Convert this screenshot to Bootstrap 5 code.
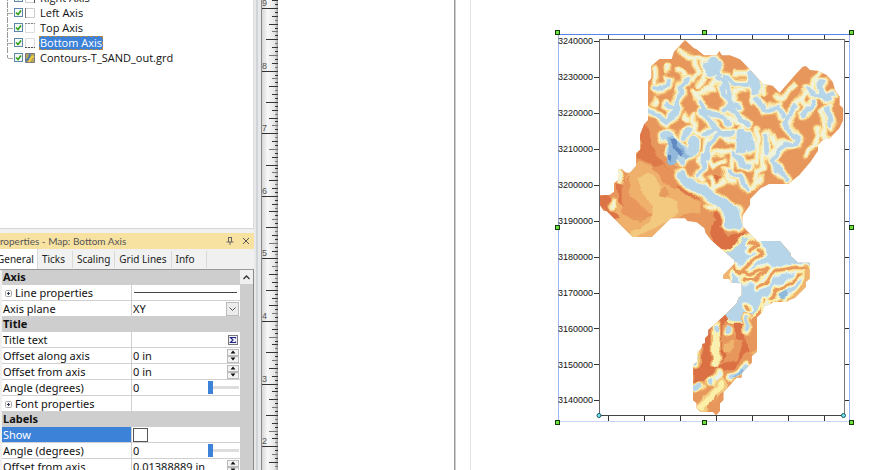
<!DOCTYPE html>
<html lang="en">
<head>
<meta charset="utf-8">
<meta name="viewport" content="width=device-width, initial-scale=1">
<title>Map: Bottom Axis</title>
<link href="https://cdn.jsdelivr.net/npm/bootstrap@5.3.0/dist/css/bootstrap.min.css" rel="stylesheet">
<style>
body{font-family:"Noto Sans","Open Sans",sans-serif;font-size:11px;line-height:15px;color:#111;background:#fff}
.side{width:254px;background:#f0f0f0}
.tree{height:229px;background:#fff;border-right:1px solid #dcdcdc;border-bottom:1px solid #d5d5d5;padding-left:7px;font-family:"Open Sans",sans-serif}
.tree ul{margin-top:-10px}
.tree li{height:15px;position:relative;padding-left:7px}
.tree li::before{content:"";position:absolute;left:0;top:0;height:15px;width:6px;border-left:1px dashed #999;}
.tree li::after{content:"";position:absolute;left:1px;top:8px;width:5px;border-top:1px dashed #aaa}
.tree li:last-child::before{height:8px}
.tick-box{appearance:none;width:9px;height:9px;margin:0;border:1px solid #5d86a8;background:#f5f9f5}
.tick-wrap{position:relative;width:9px;height:9px}
.tick-wrap svg{position:absolute;left:0;top:0;pointer-events:none}
.tree-icon{margin:0 3px 0 2px}
.tree label{padding:0 1px;line-height:14px}
.chosen{background:#3c82d9;color:#fff;outline:1px dashed #b98743;outline-offset:-1px}
.title-bar{height:16px;background:#f8e2a2;color:#555;margin-top:4px;font-family:Lato,sans-serif;font-size:10px}
.title-bar span{margin-left:-6px}
.plain{border:0;background:none;padding:0;display:flex;color:inherit}
.tabs{height:20px;font-size:10px}
.tabs button{border:0;border-right:1px solid #d9d9d9;background:#f1f1f1;height:17px;margin-top:2px;padding:0 4px;color:#222}
.tabs button:nth-child(2){padding-right:7px}
.tabs button:first-child{background:#fff;margin-left:-7px;height:20px;margin-top:0;padding-right:3px}
.tabs button:last-child{padding:0 11px 0 4px}
.grid-box{border-top:1px solid #999;border-right:1px solid #888;overflow:hidden}
.props{table-layout:fixed;width:238px;margin-left:2px;background:#fff;border-collapse:separate;border-spacing:0}
.props th,.props td{padding:0 1px;height:16px;line-height:15px;border-bottom:1px solid #d0d0d0;font-weight:400;white-space:nowrap}
.props th[scope=row]{width:130px;border-right:1px solid #d0d0d0}
.props th.sect{background:#cecece;font-weight:700;height:15px;line-height:14px;border-color:#cecece}
.props td>div{height:15px}
.props input[type=text]{border:0;padding:0;background:none;height:15px;width:90px;color:inherit}
.props .active{background:#3c82d9;color:#fff}
.expander{margin:0 3px 1px 2px}
.pick{appearance:none;border:0;background:none;padding:0;width:92px;height:15px;line-height:15px;color:inherit}
.dd{width:13px;height:14px;border:1px solid #bbb;background:#ececec}
.spin{width:12px}
.spin button{height:7px;width:12px;padding:0;border:1px solid #bbb;background:#f3f3f3;display:flex;align-items:center;justify-content:center}
.show-box{appearance:none;width:15px;height:14px;border:1px solid #555;margin:0;background:#fff;display:block}
.slide{appearance:none;width:31px;height:13px;background:linear-gradient(#ddd,#ddd) center/100% 3px no-repeat;margin:0}
.slide::-webkit-slider-thumb{appearance:none;width:5px;height:13px;background:#3c82d9}
.sbar{width:13px;background:#cdcdcd}
.sbar button{height:14px;width:13px;background:#f0f0f0;align-items:center;justify-content:center}
.splitter{width:8px;background:#e6e8ea;border-right:1px solid #888}
.splitter::before{content:"";display:block;height:100%;width:2px;margin-left:2px;background:#d0d3d8}
.ruler{width:16px;background:linear-gradient(90deg,#d7d7d7,#f8f8f8 35%,#e6e6e6 80%,#999)}
.ruler text{font:9px "Liberation Sans",Arial,sans-serif;fill:#555}
.sheet-gap{width:176px}
.sheet-edge{width:2px;background:linear-gradient(90deg,#999 50%,#ccc 50%)}
.margin-line{width:1px;margin-left:14px;background:#e4e4e4}
.map-area{padding:20px 0 0 79px}
.axis-labels{font:9px "Liberation Sans",Arial,sans-serif;fill:#111;text-anchor:end}
</style>
<script src="https://cdn.jsdelivr.net/npm/bootstrap@5.3.0/dist/js/bootstrap.bundle.min.js"></script>
</head>
<body class="vh-100 overflow-hidden d-flex">
<svg width="0" height="0" class="position-absolute" aria-hidden="true">
<symbol id="tick" viewBox="0 0 9 9"><path d="M2 4.5l2 2 3-4" fill="none" stroke="#32a11b" stroke-width="1.6"/></symbol>
<symbol id="up" viewBox="0 0 6 4"><path d="M0.500 3.500h5L3 .5z" fill="#111"/></symbol>
<symbol id="down" viewBox="0 0 6 4"><path d="M.5 .5h5L3 3.500z" fill="#111"/></symbol>
<symbol id="plus" viewBox="0 0 7 7"><rect x=".5" y=".5" width="6" height="6" rx="1" fill="#f6f6f6" stroke="#aaa"/><path d="M2 3.5h3M3.5 2v3" stroke="#335"/></symbol>
</svg>
<aside class="side d-flex flex-column flex-shrink-0 overflow-hidden">
  <div class="tree flex-shrink-0 overflow-hidden">
    <ul class="list-unstyled mb-0">
      <li class="d-flex align-items-center"><span class="tick-wrap d-flex"><input class="tick-box" type="checkbox" id="t0" checked><svg width="9" height="9"><use href="#tick"/></svg></span><svg class="tree-icon" width="11" height="10"><path d="M.5 .5h9v9h-9z" fill="#fff" stroke="#ccc"/><path d="M9.500 0v10" stroke="#555"/></svg><label for="t0">Right Axis</label></li>
      <li class="d-flex align-items-center"><span class="tick-wrap d-flex"><input class="tick-box" type="checkbox" id="t1" checked><svg width="9" height="9"><use href="#tick"/></svg></span><svg class="tree-icon" width="11" height="10"><path d="M.5 .5h9v9h-9z" fill="#fff" stroke="#ccc"/><path d="M.5 0v10" stroke="#777"/></svg><label for="t1">Left Axis</label></li>
      <li class="d-flex align-items-center"><span class="tick-wrap d-flex"><input class="tick-box" type="checkbox" id="t2" checked><svg width="9" height="9"><use href="#tick"/></svg></span><svg class="tree-icon" width="11" height="10"><path d="M.5 .5h9v9h-9z" fill="#fff" stroke="#ddd"/><path d="M0 .5h10" stroke="#888" stroke-dasharray="2 1"/></svg><label for="t2">Top Axis</label></li>
      <li class="d-flex align-items-center"><span class="tick-wrap d-flex"><input class="tick-box" type="checkbox" id="t3" checked><svg width="9" height="9"><use href="#tick"/></svg></span><svg class="tree-icon" width="11" height="10"><path d="M.5 .5h9v9h-9z" fill="#fff" stroke="#ddd"/><path d="M0 9.500h10" stroke="#555" stroke-dasharray="2 1"/></svg><label for="t3" class="chosen">Bottom Axis</label></li>
      <li class="d-flex align-items-center"><span class="tick-wrap d-flex"><input class="tick-box" type="checkbox" id="t4" checked><svg width="9" height="9"><use href="#tick"/></svg></span><svg class="tree-icon" width="11" height="10"><path d="M.5 .5h9v9h-9z" fill="#b7a755" stroke="#778"/><path d="M1 8l3-3 1-4" stroke="#4a77ae" stroke-width="2" fill="none"/><path d="M4 9l2-4 3-2" stroke="#efcf42" stroke-width="2" fill="none"/></svg><label for="t4">Contours-T_SAND_out.grd</label></li>
    </ul>
  </div>
  <div class="title-bar d-flex align-items-center flex-shrink-0"><span class="flex-grow-1 text-nowrap">Properties - Map: Bottom Axis</span>
    <button class="plain me-2" aria-label="Pin"><svg width="8" height="8" fill="none" stroke="#666"><path d="M2 .5h4M2.500 1v4M5.500 1v4M.5 5h7M4 5v3"/></svg></button>
    <button class="plain me-1" aria-label="Close"><svg width="8" height="8" fill="none" stroke="#555"><path d="M1 1l6 6M7 1l-6 6"/></svg></button>
  </div>
  <div class="tabs d-flex flex-shrink-0" role="tablist"><button role="tab" aria-selected="true">General</button><button role="tab">Ticks</button><button role="tab">Scaling</button><button role="tab">Grid Lines</button><button role="tab">Info</button></div>
  <div class="grid-box d-flex flex-grow-1">
    <table class="props align-self-start flex-shrink-0">
      <colgroup><col style="width:130px"><col></colgroup>
      <tbody>
      <tr><th class="sect" colspan="2">Axis</th></tr>
      <tr><th scope="row"><svg class="expander" width="7" height="7"><use href="#plus"/></svg>Line properties</th><td><svg class="d-block" width="104" height="3"><path d="M1 1.500h103" stroke="#444"/></svg></td></tr>
      <tr><th scope="row"><label for="plane">Axis plane</label></th><td><div class="d-flex align-items-center justify-content-between"><select class="pick" id="plane"><option>XY</option></select><span class="dd d-flex align-items-center justify-content-center"><svg width="7" height="4"><path d="M.5 .5l3 3 3-3" fill="none" stroke="#555"/></svg></span></div></td></tr>
      <tr><th class="sect" colspan="2">Title</th></tr>
      <tr><th scope="row"><label for="tt">Title text</label></th><td><div class="d-flex align-items-center justify-content-between"><input type="text" id="tt"><button class="plain" aria-label="Text editor"><svg width="11" height="10"><rect x=".5" y=".5" width="9" height="9" fill="#f3f3ff" stroke="#777"/><path d="M7.500 3.500V2.500h-5L5 5 2.500 7.500h5v-1" stroke="#22277c" fill="none" stroke-width="1.200"/></svg></button></div></td></tr>
      <tr><th scope="row"><label for="oa">Offset along axis</label></th><td><div class="d-flex align-items-center justify-content-between"><input type="text" id="oa" value="0 in"><span class="spin"><button aria-label="Increase"><svg width="6" height="4"><use href="#up"/></svg></button><button aria-label="Decrease"><svg width="6" height="4"><use href="#down"/></svg></button></span></div></td></tr>
      <tr><th scope="row"><label for="of">Offset from axis</label></th><td><div class="d-flex align-items-center justify-content-between"><input type="text" id="of" value="0 in"><span class="spin"><button aria-label="Increase"><svg width="6" height="4"><use href="#up"/></svg></button><button aria-label="Decrease"><svg width="6" height="4"><use href="#down"/></svg></button></span></div></td></tr>
      <tr><th scope="row"><label for="an">Angle (degrees)</label></th><td><div class="d-flex align-items-center justify-content-between"><span>0</span><input class="slide" type="range" id="an" value="0"></div></td></tr>
      <tr><th scope="row"><svg class="expander" width="7" height="7"><use href="#plus"/></svg>Font properties</th><td></td></tr>
      <tr><th class="sect" colspan="2">Labels</th></tr>
      <tr><th scope="row" class="active"><label for="sh">Show</label></th><td><input class="show-box" type="checkbox" id="sh"></td></tr>
      <tr><th scope="row"><label for="an2">Angle (degrees)</label></th><td><div class="d-flex align-items-center justify-content-between"><span>0</span><input class="slide" type="range" id="an2" value="0"></div></td></tr>
      <tr><th scope="row"><label for="of2">Offset from axis</label></th><td><div class="d-flex align-items-center justify-content-between"><input type="text" id="of2" value="0.01388889 in"><span class="spin"><button aria-label="Increase"><svg width="6" height="4"><use href="#up"/></svg></button><button aria-label="Decrease"><svg width="6" height="4"><use href="#down"/></svg></button></span></div></td></tr>
      </tbody>
    </table>
    <div class="sbar flex-shrink-0"><button class="plain" aria-label="Scroll up"><svg width="7" height="5"><path d="M.5 4l3-3 3 3" fill="none" stroke="#333" stroke-width="1.300"/></svg></button></div>
  </div>
</aside>
<div class="splitter flex-shrink-0"></div>
<div class="ruler flex-shrink-0 overflow-hidden"><svg id="ruler" width="16" height="100%" class="d-block" shape-rendering="crispEdges"></svg></div>
<main class="d-flex flex-grow-1 overflow-hidden">
  <div class="sheet-gap flex-shrink-0"></div><div class="sheet-edge flex-shrink-0"></div><div class="margin-line flex-shrink-0"></div>
  <div class="map-area flex-grow-1">
  <svg width="310" height="410" viewBox="0 0 310 410" class="d-block" role="img" aria-label="Contour map">
    <defs>
      <filter id="ripple" filterUnits="userSpaceOnUse" x="120" y="40" width="800" height="1170" color-interpolation-filters="sRGB"><feTurbulence type="fractalNoise" baseFrequency=".035" numOctaves="1" seed="4"/><feDisplacementMap in="SourceGraphic" scale="26" xChannelSelector="R" yChannelSelector="G"/><feGaussianBlur stdDeviation="1.8"/></filter>
      <clipPath id="land"><path d="M405 60L432 85 440 88 462 106H500L508 93 516 106H540L570 118 582 130 640 193 668 197 689 218 735 165 758 140 768 138 780 150 802 152 830 165 848 185 857 215 869 230V255L880 265V300L868 325 838 356 820 358 804 375V392L782 425 748 465 715 492H657L632 505 600 538V555L577 588V618L622 663H690L722 700V708L745 728H780V775L768 785V800L735 833 718 840 710 846H670L655 855 643 857 635 878 621 892V995L605 1008V1028L575 1060V1073H560L520 1117V1140L510 1150V1172L498 1186 490 1176H452L440 1165V1150L429 1140V1035L441 1025V1000L455 985 457 972 465 970V955L475 945V930L525 885 560 850 565 835 575 825V790L545 788 537 776H520V765L553 732V720L515 688 483 660 467 640 463 625 440 607 412 603 405 595H362L305 651H248L170 573 160 572 147 550V525H178L192 515V490L204 480V447H215L228 458H240L258 438V400L270 390V345L283 312 294 300V185L304 175V138L328 117H365L372 95Z"/></clipPath>
      <g id="narrow">
        <path d="M315 145L316 188M348 175L354 190M385 148L397 163M316 238V252M390 98L405 103 430 115 482 118M407 176L430 178 441 160 436 120M430 215L445 222 465 210 492 205M437 225L462 248M498 180L480 200 492 207M405 290L418 298M430 285L435 335 458 345M460 120L462 180 448 195M350 135L352 150M555 160H590M553 240L556 212 580 208M640 185L643 215M530 290L575 310 582 340M608 222L612 250M735 195L690 240 678 228M738 250L790 190 806 155M768 258L790 252M805 180L800 232M762 215L754 240 764 252M800 325L805 345 795 375 770 400M838 355L820 345 818 275 840 260M688 375L655 410M622 330V390L618 430 585 425M470 355L465 400 445 420M470 405L540 390 555 410 543 440M455 440L470 420 490 440 522 420M450 460L460 480M485 475L500 500 520 485M525 450L530 475 550 485M640 380L638 445 620 455V480M680 450L700 465M590 505L620 500 632 475M204 455L210 480M190 545L188 560M260 355V390M575 365L540 360 515 340M665 350L680 372 700 370M496 505L470 520M475 560L500 565M516 300L545 305"/>
      </g>
      <g id="medium">
        <path d="M358 182L350 198 325 208 310 205M295 272L322 287 350 308 383 268 378 245 393 220 390 198 408 190 412 175M455 250L470 280 520 292 538 312M502 168L518 188 520 222 540 245 525 270M525 190L538 215 538 262 572 298 595 315M565 260L540 255M622 240L642 270 685 262M735 262L704 310 722 338 748 355 740 372 700 375 668 420 685 450 710 480M775 205L790 225 828 228 850 222M835 268L842 318M452 275L478 302 508 340 548 340M462 345L490 330M460 405L458 440 445 465M552 395L575 430 600 440M535 455L570 470 592 508M820 185L805 205 835 240M700 290L690 270M595 190L560 190 525 175M500 345L480 370 465 420M648 345L650 395M350 255L378 270M790 250L760 285M480 128L500 140 512 160M420 330L400 350"/>
      </g>
      <g id="broad">
        <path d="M490 125L500 145M475 145L480 155M605 165L618 210M575 345V385M600 382L595 350M345 345L372 365 405 410 425 395 430 365M365 395L395 420M395 465L405 482 445 505 470 520 530 562 550 610M540 565V612L562 615M555 575L560 610"/>
      </g>
      <g id="southveins">
        <path d="M600 665L625 675 600 690M570 760L610 720 640 700 625 690M572 757L600 765 650 740M580 780H610L655 745M690 750L645 785M690 750L740 742 770 745M620 800L655 785M665 835L680 815 715 790 750 765M670 850L690 840M590 860V865M645 850V842M550 735L570 760"/>
      </g>
      <g id="goldfans">
        <path d="M770 740V800L715 848M525 775L545 740"/>
      </g>
      <g id="southdrops"><path d="M497 920V1030M537 930L536 935M591 890V930M440 1035V1000M437 1105L450 1098M475 1082L485 1082M590 1040L545 1073M497 1075L510 1060M520 1095L498 1120"/></g>
    </defs>
    <g transform="scale(.333333)" clip-path="url(#land)">
      <path d="M130 50H900V1200H130Z" fill="#e8975c"/>
      <g filter="url(#ripple)">
      <!-- southwest plateau -->
      <path d="M245 450L270 425 315 440 370 485 400 525 455 545 450 575 400 590 365 600 300 665 240 665 195 590 205 510Z" fill="#efb06b"/>
      <path d="M270 290L300 340 300 380 325 410 390 480 450 510 465 540 415 530 365 495 325 445 290 425 262 415V390H270Z" fill="#de7a49"/>
      <path d="M147 525H175L180 560 210 590 190 600 145 550ZM200 490L225 480 215 510 235 530 215 560 205 540Z" fill="#dc7448"/>
      <path d="M215 490L245 470 235 510 275 560 310 590 255 600 215 575Z" fill="#e8965c"/>
      <path d="M265 475L300 460 335 500 340 530 385 540 385 580 330 615 250 655 235 640 300 605 310 580 290 530 270 510Z" fill="#f3c980"/>
      <path d="M330 520L345 505 355 520 345 535ZM245 595L300 590 275 605Z" fill="#e69a5d"/>
      <path d="M310 445L340 430 390 480 380 510 340 490Z" fill="#e79258"/>
      <path d="M480 635L490 605 515 620 530 650 590 635 545 690 500 690ZM495 575L520 580 515 615 490 620ZM490 465L510 465 525 480 510 495Z" fill="#da7044"/>
      <!-- northern basins -->
      <g fill="none" stroke-linecap="round" stroke-linejoin="round">
        <g stroke="#efb56f"><use href="#narrow" stroke-width="25"/><use href="#medium" stroke-width="36"/><use href="#broad" stroke-width="50"/></g>
        <g stroke="#fbe6a0"><use href="#narrow" stroke-width="18"/><use href="#medium" stroke-width="29"/><use href="#broad" stroke-width="43"/></g>
        <g stroke="#f0f3dc"><use href="#narrow" stroke-width="9"/><use href="#medium" stroke-width="21"/><use href="#broad" stroke-width="36"/></g>
        <g stroke="#b6d5e8"><use href="#medium" stroke-width="14"/><use href="#broad" stroke-width="30"/></g>
      </g>
      <path d="M345 350L365 345 385 360 400 395 425 410 415 420 385 405 372 435 350 425 360 395Z" fill="#92b9da"/>
      <path d="M357 355L370 348 382 362 379 380 400 400 398 409 375 390ZM357 408L367 412 366 423 358 420Z" fill="#6189c1"/>
      <!-- south-east lobe -->
      <path d="M485 685L540 695 575 650H700L790 720V850H660L635 870 600 910H500V840L560 800 510 780 540 735Z" fill="#b6d5e8" stroke="#fcefa8" stroke-width="7"/>
      <g fill="none" stroke-linecap="round" stroke-linejoin="round">
        <g stroke="#e6f2ef"><use href="#southveins" stroke-width="27"/><use href="#goldfans" stroke-width="36"/></g>
        <g stroke="#fcefa8"><use href="#southveins" stroke-width="20"/><use href="#goldfans" stroke-width="29"/></g>
        <g stroke="#efb56f"><use href="#southveins" stroke-width="11"/><use href="#goldfans" stroke-width="19"/></g>
        <use href="#southveins" stroke="#e8975c" stroke-width="7"/>
      </g>
      <path d="M685 825L710 810 718 818 700 840ZM740 690L720 700Z" fill="#8fb9d9"/>
      <!-- southern tail -->
      <path d="M420 945L515 883 535 905 560 908 600 908 610 880 640 850V1010L560 1070 510 1200H420Z" fill="#e8975c" stroke="#fcefa8" stroke-width="9"/>
      <path d="M460 930L520 880 535 900 520 915 515 980 530 1010 510 1035 560 1020 580 960 555 960 555 908H578L585 970 600 990 545 1045 480 1075 430 1090V1035L455 1030Z" fill="#da7044"/>
      <path d="M525 970L550 965 540 1000 520 995ZM600 1000L618 980 610 1010Z" fill="#efb56f"/>
      <g fill="none" stroke-linecap="round" stroke-linejoin="round">
        <use href="#southdrops" stroke="#efb56f" stroke-width="30"/><use href="#southdrops" stroke="#fcefa8" stroke-width="22"/><use href="#southdrops" stroke="#e6f2ef" stroke-width="12"/>
        <path d="M515 1090L490 1125 455 1165" stroke="#f3cb80" stroke-width="35"/><path d="M515 1090L490 1125 455 1162" stroke="#fcefa8" stroke-width="20"/>
        <path d="M537 925V932M591 895V925M439 1030V1008M437 1105L450 1098M590 1045L550 1072M497 925V935M476 1084H480" stroke="#b6d5e8" stroke-width="14"/>
        <path d="M497 945V1025" stroke="#fcefa8" stroke-width="12"/>
        <path d="M475 1165L500 1130" stroke="#e8975c" stroke-width="9"/><path d="M577 1055L558 1070" stroke="#8fb9d9" stroke-width="8"/>
      </g>
      </g>
    </g>
    <g fill="none" shape-rendering="crispEdges">
      <path d="M8.500 401.500V14.500M299.500 14.500V401.500" stroke="#9db7f5"/><path d="M8 14.500H300" stroke="#5b83ea"/><path d="M8 401.500H300" stroke="#c9d5f8"/>
      <path d="M49.500 395.500V19.500H294.500" stroke="#666"/><path d="M294.500 19V396" stroke="#777"/><path d="M49 395.500H294" stroke="#444"/>
      <path d="M44 21.500h5M44 57.500h5M44 93.500h5M44 129.500h5M44 165.500h5M44 201.500h5M44 237.500h5M44 273.500h5M44 308.500h5M44 344.500h5M44 380.500h5M295 21.500h4M295 57.500h4M295 93.500h4M295 129.500h4M295 165.500h4M295 201.500h4M295 237.500h4M295 273.500h4M295 308.500h4M295 344.500h4M295 380.500h4M58.500 15v4M94.500 15v4M130.500 15v4M166.500 15v4M202.500 15v4M238.500 15v4M274.500 15v4M58.500 396v5M94.500 396v5M130.500 396v5M166.500 396v5M202.500 396v5M238.500 396v5M274.500 396v5" stroke="#333"/>
    </g>
    <g class="axis-labels"><text x="43" y="24">3240000</text><text x="43" y="60">3230000</text><text x="43" y="96">3220000</text><text x="43" y="132">3210000</text><text x="43" y="168">3200000</text><text x="43" y="204">3190000</text><text x="43" y="240">3180000</text><text x="43" y="276">3170000</text><text x="43" y="312">3160000</text><text x="43" y="348">3150000</text><text x="43" y="383">3140000</text></g>
    <g fill="#6be33c" stroke="#173b0c" shape-rendering="crispEdges"><path d="M5.500 10.500h4v4h-4zM152.500 10.500h4v4h-4zM299.500 10.500h4v4h-4zM5.500 205.500h4v4h-4zM299.500 205.500h4v4h-4zM5.500 400.500h4v4h-4zM152.500 400.500h4v4h-4zM299.500 400.500h4v4h-4z"/></g>
    <g fill="#6fe9ee" stroke="#1c5560"><circle cx="49" cy="395.500" r="2"/><circle cx="293.500" cy="395.500" r="2"/></g>
  </svg>
  </div>
</main>
<script>
// Vertical ruler: sixteenths of an inch, numbered at each inch.
const inch = 62.6, top9 = 8, svg = document.getElementById('ruler');
let out = '';
for (let i = -4; i < 160; i++) {
  const y = Math.round(top9 + i * inch / 16) + .5;
  const len = i % 16 === 0 ? 16 : i % 8 === 0 ? 12 : i % 4 === 0 ? 9 : i % 2 === 0 ? 6 : 3;
  const tone = i % 8 !== 0 && i % 3 === 0 ? '#777' : '#333';
  out += `<path d="M${16 - len} ${y}h${len}" stroke="${tone}"/>`;
  if (i % 16 === 0) out += `<text x="0" y="${y - 3}">${9 - i / 16}</text>`;
}
svg.innerHTML = out;
</script>
</body>
</html>
